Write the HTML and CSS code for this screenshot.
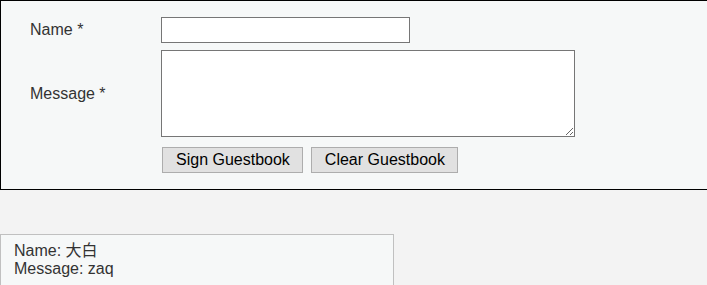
FILE: index.html
```html
<!DOCTYPE html>
<html lang="en">
<head>
  <meta charset="UTF-8" />
  <title>Guestbook</title>
  <link rel="stylesheet" href="styles.css">
</head>
<body>
  <form class="guestbook" id="guestbookForm">
    <label class="field-label" for="gbName">Name *</label>
    <div class="field">
      <input type="text" id="gbName" name="name" class="name-input" />
    </div>

    <label class="field-label" for="gbMessage">Message *</label>
    <div class="field">
      <textarea id="gbMessage" name="message" class="message-input"></textarea>
    </div>

    <div></div>
    <div class="actions">
      <button type="submit">Sign Guestbook</button>
      <button type="button">Clear Guestbook</button>
    </div>
  </form>

  <div class="entries">
    <div class="entry">
      <div>Name: 大白</div>
      <div>Message: zaq</div>
    </div>
  </div>
</body>
</html>
```

FILE: styles.css
```css
body {
  margin: 0;
  background: #f3f3f3;
  font-family: "Liberation Sans", Arial, "Noto Sans CJK SC", sans-serif;
  font-size: 16px;
  color: #333;
}
.guestbook {
  display: grid;
  grid-template-columns: 131px auto;
  row-gap: 7px;
  align-items: center;
  padding: 16px 0 16px 29px;
  background: #f6f8f8;
  border: 1px solid #000;
  border-right: 0;
}
.field-label {
  color: #333;
}
.field {
  display: flex;
}
.name-input, .message-input {
  box-sizing: border-box;
  margin: 0;
  border: 1px solid #767676;
  background: #fff;
  font-family: inherit;
  font-size: 14px;
}
.name-input {
  width: 249px;
  height: 26px;
  padding: 2px 4px;
}
.message-input {
  width: 414px;
  height: 87px;
  padding: 2px 4px;
}
.actions {
  display: flex;
  gap: 8px;
  padding: 3px 0 0 1px;
}
button {
  margin: 0;
  height: 26px;
  padding: 0 12px 0 13px;
  font-family: inherit;
  font-size: 16px;
  color: #000;
  background: #e1e1e1;
  border: 1px solid #adadad;
  border-radius: 0;
  cursor: pointer;
}
button:hover {
  background: #e5f1fb;
  border-color: #0078d7;
}
.entries {
  margin-top: 44px;
}
.entry {
  width: 367px;
  padding: 7px 12px 20px 13px;
  background: #f6f8f8;
  border: 1px solid #c0c0c0;
  line-height: 18px;
  color: #333;
}
```
